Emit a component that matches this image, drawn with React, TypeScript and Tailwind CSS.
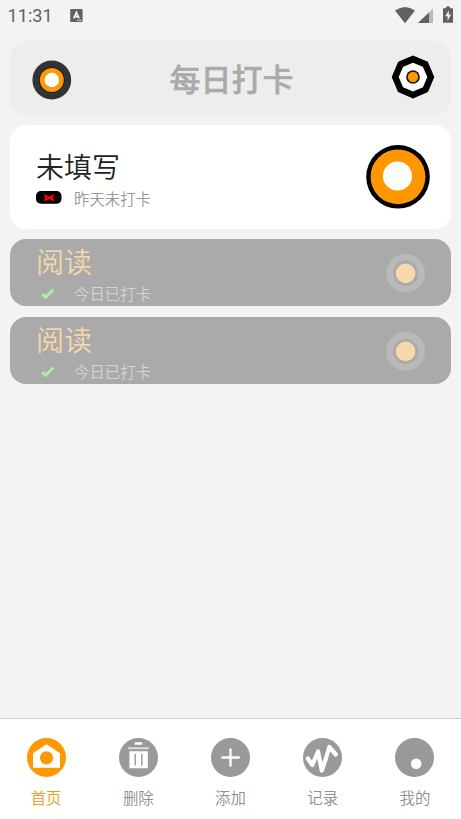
import type { ReactNode } from "react"
import clsx from "clsx"

interface NavItem {
  label: string
  icon: ReactNode
  active?: boolean
}

function StatusBar() {
  return (
    <div className="flex h-[41px] items-start pt-[5px] pr-[7px] pl-[7.5px] font-['Roboto',sans-serif] text-[#616161]">
      <span className="text-[18.2px] leading-[22px]">11:31</span>
      <svg className="mt-[4px] ml-[17px]" width="13" height="13" viewBox="0 0 13 13">
        <rect x="0.2" y="0" width="12.4" height="13" rx="1" fill="#616161" />
        <path d="M3.8 9.3 6.4 3.4 9 9.3M4.6 7.6H8.2" fill="none" stroke="#f3f3f3" strokeWidth="1.7" />
        <path d="M7 11.3h1.2M9 11.3h2.4" stroke="#f3f3f3" strokeWidth="1" />
      </svg>
      <svg className="mt-[1px] ml-auto" width="60" height="19" viewBox="0 0 60 19">
        <path d="M1 4.2Q11-3 21 4.2L11 17Z" transform="translate(0 .3)" fill="#616161" />
        <path d="M24 17 39 2.5V17Z" fill="#b9b9b9" />
        <path d="M24 17 35 6.5V17Z" fill="#616161" />
        <path d="M49 2.2h3V0.4h4v1.8h3V16.8H49Z" fill="#616161" />
        <path d="M54.8 4.5 51.2 10.3h2.4v4.5l3.5-6.2h-2.3Z" fill="#f3f3f3" />
      </svg>
    </div>
  )
}

function Header() {
  return (
    <header className="flex h-[74px] items-center justify-between rounded-[16px] bg-[#ededed] pr-[16px] pl-[22px]">
      <svg className="relative top-[1.5px]" width="40" height="40" viewBox="0 0 40 40">
        <circle cx="19.8" cy="20" r="19.4" fill="#333333" />
        <circle cx="19.8" cy="20" r="12.8" fill="#1c1206" />
        <circle cx="19.8" cy="20" r="12" fill="#fd9a09" />
        <circle cx="19.8" cy="20" r="7.2" fill="#fff" />
      </svg>
      <h1 className="pb-[1px] text-[31px] leading-[46px] font-medium text-[#aaaaaa] [-webkit-text-stroke:0.5px_#aaaaaa]">
        每日打卡
      </h1>
      <svg className="relative -top-[1px]" width="44" height="44" viewBox="-22 -22 44 44">
        <path d="M0-21.5 14.8-15.2 21.3 0 15 15 0 21.5-15 15-21.3 0-14.8-15.2Z" fill="#000" />
        <path d="M0-14.3 9.8-10.2 14.3 0 10 10.2 0 14.5-10 10.2-14.3 0-9.8-10.2Z" fill="#fff" />
        <circle r="6.8" fill="#111" />
        <circle r="5.2" fill="#ff9800" />
      </svg>
    </header>
  )
}

function PendingCard() {
  return (
    <section className="mt-[10px] flex h-[104px] items-center justify-between rounded-[16px] bg-white pr-[20px] pl-[26px]">
      <div>
        <h2 className="text-[28px] leading-[40px] font-[350] text-[#222222]">未填写</h2>
        <div className="flex h-[22px] items-center text-[15.4px] font-[350] text-[#999999]">
          <svg className="mr-[12px]" width="26" height="14" viewBox="0 0 26 14">
            <rect x="0" y="1" width="25.5" height="12.7" rx="4.8" fill="#000" />
            <path
              d="M7.8 4 10.5 5 13.2 6.3 15.8 5 18.5 4 17.2 7.7 18.5 11.4 15.8 10.4 13.2 9.2 10.5 10.4 7.8 11.4 9.1 7.7Z"
              fill="#f00000"
            />
          </svg>
          <span className="pt-[3px]">昨天未打卡</span>
        </div>
      </div>
      <svg className="relative -top-px" width="66" height="66" viewBox="-33 -33 66 66">
        <circle cx="0" cy="0.8" r="31.8" fill="#000" />
        <circle cx="0" cy="0.8" r="27.4" fill="#ff9800" />
        <circle cx="-0.5" cy="0" r="14.6" fill="#fff" />
      </svg>
    </section>
  )
}

function DoneCard({ title }: { title: string }) {
  return (
    <section className="flex h-[67px] items-center justify-between rounded-[16px] bg-[#aaaaaa] pr-[25px] pl-[26px]">
      <div>
        <h2 className="pb-[2px] text-[28px] leading-[38px] font-[350] text-[#f6d7a9]">{title}</h2>
        <div className="flex h-[22px] items-center text-[15.4px] font-[350] text-[#d4d4d4]">
          <svg className="mr-[12px]" width="26" height="14" viewBox="0 0 26 14">
            <path d="M6.4 8.2 9.7 11.2 17.2 3.8" fill="none" stroke="#acefac" strokeWidth="3" />
          </svg>
          <span className="pt-[3px]">今日已打卡</span>
        </div>
      </div>
      <svg width="40" height="40" viewBox="0 0 40 40">
        <circle cx="19.6" cy="20.2" r="19.5" fill="#b9b9b9" />
        <circle cx="19.6" cy="20.4" r="12.6" fill="#aaaaaa" />
        <circle cx="19.6" cy="20.4" r="9.8" fill="#f7d8aa" />
      </svg>
    </section>
  )
}

const navItems: NavItem[] = [
  {
    label: "首页",
    active: true,
    icon: (
      <>
        <path d="M19.5 6.3 33 15.3V29.8H6V15.3Z" fill="#fff" />
        <circle cx="19.5" cy="19.8" r="6.6" fill="#ff9800" />
      </>
    ),
  },
  {
    label: "删除",
    icon: (
      <>
        <path d="M15.7 4.2h7.6v2.6h-7.6ZM10.4 13.2h18.4v17H10.4Z" fill="#fff" />
        <path d="M9.2 10.2h20.6" stroke="#ddd" strokeWidth="2" />
        <path d="M16.2 16v11.5M22.8 16v11.5" stroke="#999" strokeWidth="1.4" />
      </>
    ),
  },
  {
    label: "添加",
    icon: <path d="M10.5 19.5h18.2M19.5 10.4v18.2" stroke="#fff" strokeWidth="2.3" />,
  },
  {
    label: "记录",
    icon: (
      <path
        d="M4.8 20.5 9.3 27 15 13.5 18.8 32.5 23 20 26.3 9 32.8 16.5"
        fill="none"
        stroke="#fff"
        strokeWidth="4.2"
        strokeLinejoin="round"
        strokeLinecap="round"
      />
    ),
  },
  {
    label: "我的",
    icon: <circle cx="21.2" cy="25.8" r="5.3" fill="#fff" />,
  },
]

function BottomNav() {
  return (
    <nav className="grid h-[101px] grid-cols-5 border-t border-[#cccccc] bg-white">
      {navItems.map((item) => (
        <div
          key={item.label}
          className={clsx(
            "flex flex-col items-center pt-[19px] text-[15.4px] font-[350]",
            item.active ? "text-[#eb9b1c]" : "text-[#8f8f8f]",
          )}
        >
          <svg width="39" height="39" viewBox="0 0 39 39">
            <circle cx="19.5" cy="19.5" r="19.5" fill={item.active ? "#ff9800" : "#999"} />
            {item.icon}
          </svg>
          <span className="mt-[9px] leading-[22px]">{item.label}</span>
        </div>
      ))}
    </nav>
  )
}

export default function App() {
  return (
    <div className="flex h-[819px] w-[461px] flex-col bg-[#f3f3f3] font-['Noto_Sans_CJK_SC',sans-serif]">
      <StatusBar />
      <main className="flex-1 px-[10px]">
        <Header />
        <PendingCard />
        <div className="mt-[10px] flex flex-col gap-[11px]">
          <DoneCard title="阅读" />
          <DoneCard title="阅读" />
        </div>
      </main>
      <BottomNav />
    </div>
  )
}
